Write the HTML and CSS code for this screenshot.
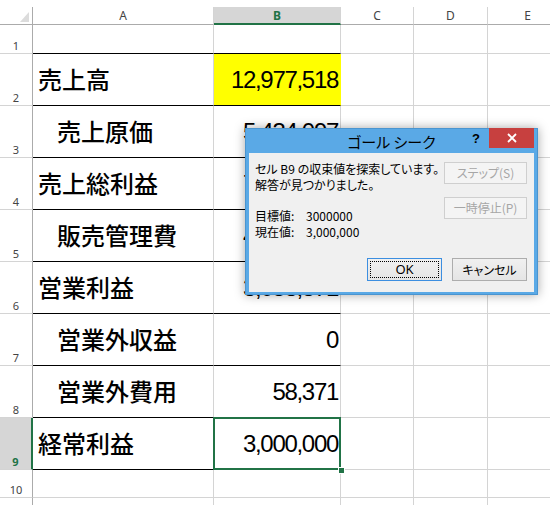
FILE: index.html
```html
<!DOCTYPE html>
<html lang="ja">
<head>
<meta charset="utf-8">
<title>ゴール シーク</title>
<link rel="stylesheet" href="styles.css">
</head>
<body>
<div class="sheet">
  <div class="corner"><svg class="tri" width="9" height="10" viewBox="0 0 9 10"><polygon points="9,0 9,10 0,10" fill="#dcdcdc"/></svg></div>
  <div class="ch">A</div><div class="ch ch-sel">B</div><div class="ch">C</div><div class="ch">D</div><div class="ch">E</div>

  <div class="rh">1</div><div class="c bk"></div><div class="c bk"></div><div class="c"></div><div class="c"></div><div class="c"></div>

  <div class="rh">2</div><div class="c bk lbl">売上高</div><div class="c bk num hl">12,977,518</div><div class="c"></div><div class="c"></div><div class="c"></div>

  <div class="rh">3</div><div class="c bk lbl ind">売上原価</div><div class="c bk num">5,434,097</div><div class="c"></div><div class="c"></div><div class="c"></div>

  <div class="rh">4</div><div class="c bk lbl">売上総利益</div><div class="c bk num">7,543,421</div><div class="c"></div><div class="c"></div><div class="c"></div>

  <div class="rh">5</div><div class="c bk lbl ind">販売管理費</div><div class="c bk num">4,485,050</div><div class="c"></div><div class="c"></div><div class="c"></div>

  <div class="rh">6</div><div class="c bk lbl">営業利益</div><div class="c bk num">3,058,371</div><div class="c"></div><div class="c"></div><div class="c"></div>

  <div class="rh">7</div><div class="c bk lbl ind">営業外収益</div><div class="c bk num">0</div><div class="c"></div><div class="c"></div><div class="c"></div>

  <div class="rh">8</div><div class="c bk lbl ind">営業外費用</div><div class="c bk num">58,371</div><div class="c"></div><div class="c"></div><div class="c"></div>

  <div class="rh rh-sel">9</div><div class="c bk lbl">経常利益</div><div class="c bk num sel">3,000,000</div><div class="c"></div><div class="c"></div><div class="c"></div>

  <div class="rh">10</div><div class="c"></div><div class="c"></div><div class="c"></div><div class="c"></div><div class="c"></div>

  <div class="rh"></div><div class="c"></div><div class="c"></div><div class="c"></div><div class="c"></div><div class="c"></div>
</div>

<div class="dlg">
  <div class="title">
    <div></div>
    <div class="title-text">ゴール シーク</div>
    <div class="ctrls">
      <div class="help">?</div>
      <div class="close"><svg width="10" height="10" viewBox="0 0 10 10"><path d="M1 1 L9 9 M9 1 L1 9" stroke="#fff" stroke-width="1.8" fill="none"/></svg></div>
    </div>
  </div>
  <div class="client">
    <div class="top">
      <div class="msg">
        <p>セル B9 の収束値を探索しています。</p>
        <p>解答が見つかりました。</p>
        <p class="gap"><span class="key">目標値:</span><span class="val">3000000</span></p>
        <p><span class="key">現在値:</span><span class="val">3,000,000</span></p>
      </div>
      <div class="side">
        <div class="btn dis">ステップ(S)</div>
        <div class="btn dis">一時停止(P)</div>
      </div>
    </div>
    <div class="bottom">
      <div class="btn ok">OK</div>
      <div class="btn">キャンセル</div>
    </div>
  </div>
</div>
</body>
</html>
```

FILE: styles.css
```css
html, body {
  margin: 0;
  padding: 0;
}
body {
  width: 550px;
  height: 505px;
  overflow: hidden;
  position: relative;
  background: #ffffff;
  font-family: "Noto Sans", "Noto Sans CJK JP", sans-serif;
}
.sheet {
  display: grid;
  grid-template-columns: 33px 181px 127px 73px 74px 80px;
  grid-template-rows: 18px 29px repeat(8, 52px) 28px 30px;
  margin-top: 7px;
}
.sheet > div {
  box-sizing: border-box;
}
.corner {
  border-right: 1px solid #ababab;
  border-bottom: 1px solid #ababab;
  display: flex;
  justify-content: flex-end;
  align-items: flex-end;
  padding: 0 3px 2px 0;
}
.tri {
  display: block;
}
.ch {
  border-right: 1px solid #d4d4d4;
  border-bottom: 1px solid #ababab;
  display: flex;
  justify-content: center;
  align-items: center;
  font-size: 12px;
  color: #444444;
  line-height: 1;
}
.ch-sel {
  background: #d6d6d6;
  color: #217346;
  font-weight: bold;
  border-bottom: 2px solid #217346;
  padding-top: 1px;
}
.rh {
  border-right: 1px solid #ababab;
  border-bottom: 1px solid #d4d4d4;
  display: flex;
  justify-content: center;
  align-items: flex-end;
  font-size: 11px;
  color: #444444;
  line-height: 1;
  padding-bottom: 2px;
}
.rh-sel {
  background: #d6d6d6;
  color: #217346;
  font-weight: bold;
  border-right: 2px solid #217346;
}
.c {
  border-right: 1px solid #d4d4d4;
  border-bottom: 1px solid #d4d4d4;
}
.c.bk {
  border-bottom-color: #000000;
}
.lbl {
  font-family: "Noto Sans CJK JP", sans-serif;
  font-size: 24px;
  font-weight: 500;
  color: #000000;
  display: flex;
  align-items: center;
  padding: 0 0 2px 5px;
  white-space: nowrap;
}
.ind {
  padding-left: 24px;
}
.num {
  font-family: "Liberation Sans", Arial, sans-serif;
  font-size: 24px;
  color: #000000;
  display: flex;
  align-items: center;
  justify-content: flex-end;
  padding: 1px 2px 0 0;
  letter-spacing: -1.3px;
  white-space: nowrap;
}
.hl {
  background: #ffff00;
  border-right-color: #ffff00;
}
.sel {
  position: relative;
}
.sel::after {
  content: "";
  position: absolute;
  left: -1px;
  right: -1px;
  top: -1px;
  bottom: -1px;
  border: 2px solid #217346;
}
.sel::before {
  content: "";
  position: absolute;
  right: -5px;
  bottom: -5px;
  width: 7px;
  height: 7px;
  box-sizing: border-box;
  background: #217346;
  border: 1px solid #ffffff;
  z-index: 2;
}

/* dialog */
.dlg {
  position: absolute;
  left: 245px;
  top: 128px;
  width: 293px;
  height: 167px;
  box-sizing: border-box;
  background: #5aa9e6;
  border: 1px solid #4a95d0;
  padding: 0 3px 2px 3px;
  box-shadow: 0 0 10px rgba(0, 0, 0, 0.35);
  display: flex;
  flex-direction: column;
  font-family: "Noto Sans CJK JP", sans-serif;
  color: #000000;
  z-index: 10;
}
.title {
  height: 24px;
  display: grid;
  grid-template-columns: 1fr auto 1fr;
  align-items: start;
}
.title-text {
  font-size: 15px;
  line-height: 24px;
  font-feature-settings: "palt";
  padding-top: 1px;
}
.ctrls {
  justify-self: end;
  display: flex;
  margin-top: -1px;
}
.help {
  width: 26px;
  height: 20px;
  display: flex;
  justify-content: center;
  align-items: center;
  font-family: "Liberation Sans", Arial, sans-serif;
  font-weight: bold;
  font-size: 13px;
}
.close {
  width: 45px;
  height: 20px;
  background: #c7403f;
  display: flex;
  justify-content: center;
  align-items: center;
}
.close svg {
  display: block;
}
.client {
  flex: 1;
  background: #f0f0f0;
  display: flex;
  flex-direction: column;
  padding: 8px 7px 11px 6px;
  font-size: 12px;
  line-height: 15.5px;
  font-feature-settings: "palt";
}
.top {
  display: flex;
  justify-content: space-between;
}
.msg p {
  margin: 0;
  white-space: nowrap;
}
.msg p.gap {
  margin-top: 16px;
}
.key {
  display: inline-block;
  width: 51px;
}
.side {
  display: flex;
  flex-direction: column;
  gap: 13px;
  padding-top: 1px;
}
.btn {
  box-sizing: border-box;
  width: 83px;
  height: 22px;
  border: 1px solid #adadad;
  background: linear-gradient(#f0f0f0, #e5e5e5);
  display: flex;
  justify-content: center;
  align-items: center;
  font-size: 12px;
  white-space: nowrap;
}
.btn.dis {
  color: #a6a6a6;
  border-color: #cfcfcf;
  background: #f4f4f4;
}
.bottom {
  margin-top: auto;
  display: flex;
  justify-content: flex-end;
  gap: 10px;
}
.bottom .btn {
  width: 75px;
  height: 23px;
}
.ok {
  position: relative;
  border-color: #3c8ee0;
  font-family: "Noto Sans", sans-serif;
  font-size: 13px;
}
.ok::after {
  content: "";
  position: absolute;
  left: 2px;
  right: 2px;
  top: 2px;
  bottom: 2px;
  border: 1px dotted #000000;
}
```
